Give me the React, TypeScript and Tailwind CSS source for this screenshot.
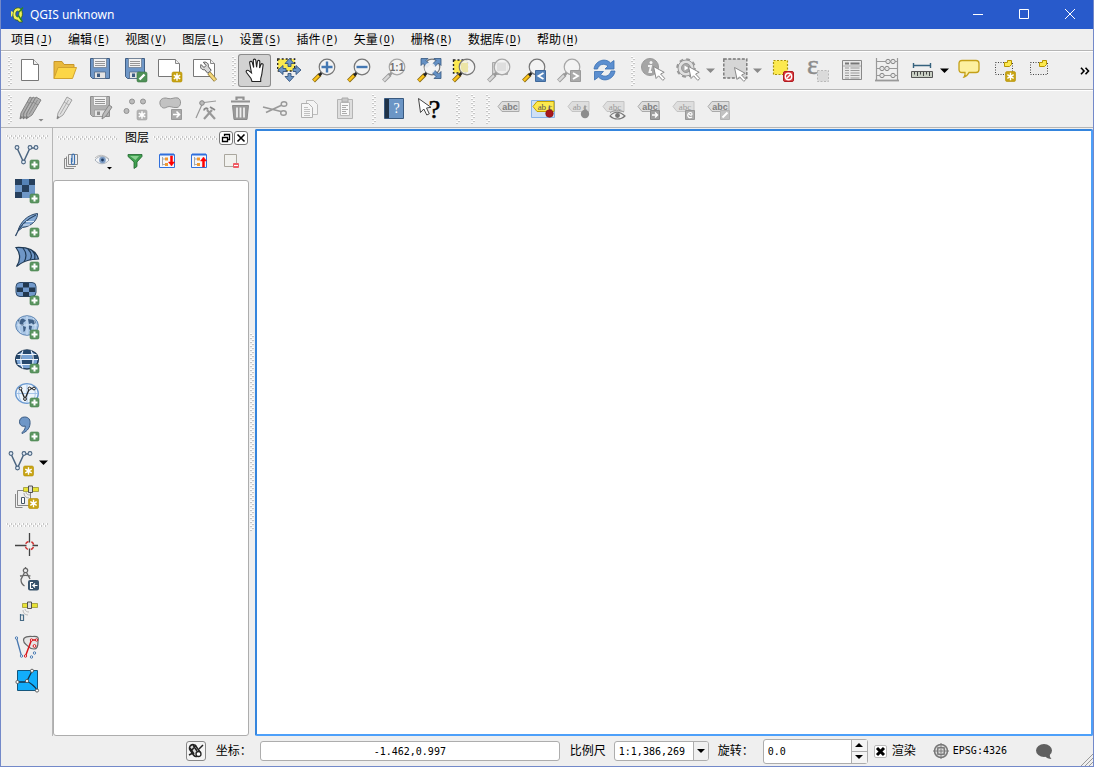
import clsx from 'clsx';
import { FunctionComponent, ReactNode } from 'react';

interface ArtProps {
  children: ReactNode;
  size?: number;
}

const Art: FunctionComponent<ArtProps> = ({ children, size = 25 }) => (
  <svg
    width={size}
    height={size}
    viewBox={`0 0 ${size} ${size}`}
    fill="none"
    aria-hidden="true"
    className="shrink-0 overflow-visible"
  >
    {children}
  </svg>
);

/* ---------- shared icon parts ---------- */

interface PartProps {
  x?: number;
  y?: number;
}

const PlusBadge = ({ x = 15, y = 15 }: PartProps) => (
  <g transform={`translate(${x} ${y})`}>
    <rect width="9" height="9" rx="1.5" fill="#5b9560" stroke="#44804b" strokeWidth=".6" />
    <path d="M4.5 1.5v6M1.5 4.5h6" stroke="#fff" strokeWidth="2" />
  </g>
);

const StarBadge = ({ x = 14, y = 14, gray = false }: PartProps & { gray?: boolean }) => (
  <g transform={`translate(${x} ${y})`}>
    <rect width="10" height="10" rx="1.5" fill={gray ? '#b4b4b4' : '#c8a414'} stroke={gray ? '#a2a2a2' : '#b38f00'} strokeWidth=".6" />
    <path d="M5 1.3v7.4M1.8 3.1l6.4 3.8M8.2 3.1L1.8 6.9" stroke="#fff" strokeWidth="1.4" />
    <circle cx="5" cy="5" r="1.7" fill="#fff" />
  </g>
);

const Cursor = ({ x = 12, y = 8 }: PartProps) => (
  <path
    transform={`translate(${x} ${y})`}
    d="M.5.5l2.6 12 2.5-2.7 4.2 4.6 2-1.9-4.2-4.5 3.6-1.7z"
    fill="#fff"
    stroke="#8a8a8a"
    strokeWidth="1"
  />
);

const Lens = ({ gray = false, children }: { gray?: boolean; children?: ReactNode }) => (
  <>
    <path d="M1.5 23l6.5-6.5" stroke={gray ? '#9a9a9a' : '#8b6b14'} strokeWidth="4" />
    <path d="M1.8 22.6l5.6-5.6" stroke={gray ? '#d8d8d8' : '#fcc419'} strokeWidth="2.4" />
    <path d="M7 17.5l3-3" stroke={gray ? '#999' : '#222'} strokeWidth="2.6" />
    <circle cx="15" cy="9" r="7.8" fill="#f3f3f3" fillOpacity=".85" stroke={gray ? '#a6a6a6' : '#777'} strokeWidth="1.2" />
    {children}
  </>
);

const Floppy = ({ gray = false }: { gray?: boolean }) => (
  <>
    <path d="M2.5.5h19v20h-17l-2-2z" fill={gray ? '#b0b0b0' : '#6f97c7'} stroke={gray ? '#8e8e8e' : '#415f85'} />
    <path d="M5.5.5h13v9h-13z" fill="#f2f2f2" stroke={gray ? '#9a9a9a' : '#66758a'} strokeWidth=".7" />
    <path d="M7 3.5h10M7 5.5h10M7 7.5h10" stroke="#8b8b8b" strokeWidth=".9" />
    <path d="M6.5 14h11v6.5h-11z" fill="#e4e4e4" stroke={gray ? '#949494' : '#48607f'} strokeWidth=".7" />
    <path d="M9 15.5h3V19H9z" fill={gray ? '#8c8c8c' : '#3d5c83'} />
  </>
);

const Label = ({ yellow = false, faded = false, text = 'abc' }: { yellow?: boolean; faded?: boolean; text?: string }) => (
  <>
    <path
      d="M2 10.5l4-5h17v10H6z"
      fill={yellow ? '#fce94f' : '#dedede'}
      stroke={yellow ? '#c4a000' : faded ? '#c4c4c4' : '#aaa'}
    />
    <text
      x="14"
      y="13.5"
      textAnchor="middle"
      fontSize="9"
      fontWeight={faded || yellow ? 400 : 700}
      fontFamily={faded || yellow ? 'Liberation Serif, serif' : 'Liberation Sans, sans-serif'}
      fill={yellow ? '#555' : faded ? '#9a9a9a' : '#808080'}
    >
      {text}
    </text>
  </>
);

const Pencil = ({ x = 0, fill = '#c9c9c9', stroke = '#a0a0a0' }: { x?: number; fill?: string; stroke?: string }) => (
  <g transform={`translate(${x} 0)`}>
    <path d="M5 23l1-6L15 1l5 3-9 15z" fill={fill} stroke={stroke} />
    <path d="M12 6l5 3M8 18.5L16.5 4" stroke={stroke} strokeWidth=".8" />
    <path d="M5 23l.5-3 2 1z" fill="#777" />
  </g>
);

const VectorNodes = () => (
  <>
    <path d="M2 3l6.5 14L15 3h6" stroke="#4b6580" strokeWidth="1.5" />
    {[[2, 2.5], [8.5, 17], [15, 2.5], [21, 2.5]].map(([cx, cy]) => (
      <circle key={`${cx}-${cy}`} cx={cx} cy={cy} r="1.9" fill="#e4edf7" stroke="#4b6580" strokeWidth="1.1" />
    ))}
  </>
);

/* ---------- first tool bar ---------- */

const NewIcon = () => (
  <Art>
    <path d="M3.5 1.5h12l5 5v16h-17z" fill="#fff" stroke="#777" />
    <path d="M15.5 1.5v5h5" fill="#eee" stroke="#777" />
  </Art>
);

const OpenIcon = () => (
  <Art>
    <path d="M1 20.5v-17h8l2 3h10v4" fill="#e9b93c" stroke="#c7962a" />
    <path d="M1 20.5L5 9.5h18.5L19.5 20.5z" fill="#fcd647" stroke="#d2a32f" />
  </Art>
);

const SaveIcon = () => (
  <Art>
    <Floppy />
  </Art>
);

const SaveAsIcon = () => (
  <Art>
    <Floppy />
    <rect x="14" y="14" width="10" height="10" rx="1.5" fill="#4f9157" stroke="#3d7545" strokeWidth=".6" />
    <path d="M16.5 21.5l5-5" stroke="#fff" strokeWidth="2.4" />
  </Art>
);

const Sheet = () => (
  <>
    <path d="M.5 1.5h17l4 4v13H.5z" fill="#fff" stroke="#777" />
    <path d="M17.5 1.5v4h4" fill="#eee" stroke="#888" />
  </>
);

const NewComposerIcon = () => (
  <Art>
    <Sheet />
    <StarBadge />
  </Art>
);

const ComposerManagerIcon = () => (
  <Art>
    <Sheet />
    <path d="M16 15l6.5 7.5" stroke="#8b7430" strokeWidth="4" />
    <path d="M16 15l6.2 7.2" stroke="#f4d779" strokeWidth="2.6" />
    <path d="M8 6.5l3 3 2-2-2.6-3.2c3-.8 5.6 1.2 5 4.4l2.8 3.6-3.4 3-3.2-3.6c-3 .4-5-2-3.600-5.200z" fill="#d8d8d8" stroke="#555" />
  </Art>
);

const HandIcon = () => (
  <Art>
    <path
      d="M10 23.500l-1-3-4.500-6c-1-1.600.8-3 2.200-1.800l2.800 2.300L7.700 5c-.3-1.900 2-2.300 2.500-.6l1.500 5.100-.4-7c0-1.900 2.300-1.900 2.500 0l.8 6.800.8-5.800c.3-1.700 2.500-1.400 2.400.3l-.2 6.200 1.300-3.500c.6-1.500 2.500-.9 2.200.7L19.700 17l-1 3.500v3z"
      fill="#fff"
      stroke="#222"
      strokeWidth="1.100"
    />
  </Art>
);

const PanSelectionIcon = () => (
  <Art>
    <path d="M.7 1h17v12H.7z" fill="#fce94f" stroke="#222" strokeWidth="1.300" strokeDasharray="2 2" />
    <path
      d="M12.500.5l4.500 5h-3v3h-3v-3H8zM12.500 23.500l-4.500-5h3v-3h3v3h3zM1 12l5-4.500v3h3v3H6v3zM24 12l-5-4.500v3h-3v3h3v3z"
      fill="#6f97c7"
      stroke="#34557f"
      strokeWidth=".9"
    />
  </Art>
);

const ZoomInIcon = () => (
  <Art>
    <Lens>
      <path d="M15 3.500v11M9.500 9h11" stroke="#4478b3" strokeWidth="2.400" />
    </Lens>
  </Art>
);

const ZoomOutIcon = () => (
  <Art>
    <Lens>
      <path d="M9.500 9h11" stroke="#4478b3" strokeWidth="2.400" />
    </Lens>
  </Art>
);

const ZoomNativeIcon = () => (
  <Art>
    <Lens gray>
      <text x="15" y="12.500" textAnchor="middle" fontSize="10" fontWeight="700" fontFamily="Liberation Sans, sans-serif" fill="#707070">
        1:1
      </text>
    </Lens>
  </Art>
);

const ZoomFullIcon = () => (
  <Art>
    <Lens />
    <path
      d="M4 .5h7L9 2.500l4 4-3 3-4-4-2 2zM24 .5h-7l2 2-4 4 2.500 2.500 4-4 2.500 2.500zM24 20.500h-7l2-2-4-4 2.500-2.500 4 4 2.500-2.500z"
      fill="#6490c3"
      stroke="#34557f"
      strokeWidth=".8"
    />
    <circle cx="13" cy="10" r="5.500" fill="#f3f3f3" fillOpacity=".9" />
  </Art>
);

const ZoomSelectionIcon = () => (
  <Art>
    <path d="M1.500 2h14v13h-14z" fill="#fce94f" stroke="#222" strokeWidth="1.400" strokeDasharray="2 2" />
    <Lens>
      <path d="M9 5h7v9H11l-2-3z" fill="#ece5a6" />
    </Lens>
  </Art>
);

const ZoomLayerIcon = () => (
  <Art>
    <path d="M5.500 4.500h15v12h-15z" fill="#d2d2d2" stroke="#aaa" />
    <Lens gray>
      <path d="M10 5h9v8h-9z" fill="#dedede" />
    </Lens>
  </Art>
);

const ZoomLastIcon = () => (
  <Art>
    <Lens />
    <path d="M13.500 12.500h10v11h-10z" fill="#5584bb" stroke="#40699b" />
    <path d="M21.500 15l-5 3 5 3" stroke="#fff" strokeWidth="1.800" />
  </Art>
);

const ZoomNextIcon = () => (
  <Art>
    <Lens gray />
    <path d="M13.500 12.500h10v11h-10z" fill="#aaa" stroke="#9a9a9a" />
    <path d="M16 15l5 3-5 3" stroke="#fff" strokeWidth="1.800" />
  </Art>
);

const RefreshIcon = () => (
  <Art>
    <path d="M2 11C3 3 13-1 18.500 5L22 2.500V11h-9l3-3C12 5 7 6 5.500 11z" fill="#5c8fd0" stroke="#3a6eb0" strokeWidth=".8" />
    <path d="M23 13c-1 8-11 12-16.500 6L2.500 22v-8.500h9l-3 3c4 3 9 2 10.500-3.500z" fill="#5c8fd0" stroke="#3a6eb0" strokeWidth=".8" />
  </Art>
);

const IdentifyIcon = () => (
  <Art>
    <circle cx="9" cy="9" r="8.500" fill="#a5a5a5" stroke="#999" />
    <circle cx="10" cy="4.500" r="1.500" fill="#f4f4f4" />
    <path d="M7 8h3l-1.500 6H11" stroke="#f4f4f4" strokeWidth="1.900" />
    <Cursor />
  </Art>
);

const ActionIcon = () => (
  <Art>
    <circle cx="10" cy="10" r="8.800" stroke="#999" strokeWidth="2" strokeDasharray="3.900 3" />
    <circle cx="10" cy="10" r="8" fill="#e0e0e0" stroke="#999" />
    <circle cx="10" cy="10" r="4.500" fill="#aaa" stroke="#999" />
    <path d="M8.500 7.500l4 2.500-4 2.500z" fill="#fff" />
    <Cursor />
  </Art>
);

const SelectIcon = () => (
  <Art>
    <path d="M.8 1h23v19H.8z" fill="#d6d6d6" stroke="#777" strokeWidth="1.400" strokeDasharray="3 1.500" />
    <Cursor x={11} y={9} />
  </Art>
);

const DeselectIcon = () => (
  <Art>
    <path d="M3.500 2.500h14v14h-14z" fill="#fce94f" stroke="#a8930c" strokeWidth="1.200" strokeDasharray="2 1.500" />
    <rect x="13.500" y="13.500" width="10" height="10" rx="1.500" fill="#d9393e" stroke="#b01c21" />
    <circle cx="18.500" cy="18.500" r="3.200" stroke="#fff" strokeWidth="1.400" />
    <path d="M16.500 20.500l4-4" stroke="#fff" strokeWidth="1.400" />
  </Art>
);

const ExpressionIcon = () => (
  <Art>
    <text x="2" y="16" fontSize="28" fontFamily="Liberation Serif, serif" fill="#8c8c8c" stroke="#8c8c8c" strokeWidth=".4">
      ε
    </text>
    <path d="M12.500 12.500h11v11h-11z" fill="#dadada" stroke="#b8b8b8" strokeDasharray="2 1.500" />
  </Art>
);

const TableIcon = () => (
  <Art>
    <path d="M2.500 2.500h19v19h-19z" fill="#e9e9e9" stroke="#888" />
    <path d="M5 5.500h4M10.500 5.500h9" stroke="#777" strokeWidth="2" />
    <path d="M3 8h18" stroke="#aaa" />
    {[10, 12.500, 15, 17.500, 20].map((y) => (
      <path key={y} d={`M5 ${y}h4M10.500 ${y}h9`} stroke="#999" />
    ))}
  </Art>
);

const AbacusIcon = () => (
  <Art>
    <path d="M1.500 0v22M22.500 0v22M1 3.500h21M1 10.500h21M1 17.500h21" stroke="#999" strokeWidth="1.200" />
    <path d="M0 22.500h24" stroke="#999" strokeWidth="1.800" />
    {[[13, 3.500], [18, 3.500], [7, 10.500], [12, 10.500], [7, 17.500], [18, 17.500]].map(([cx, cy]) => (
      <circle key={`${cx}-${cy}`} cx={cx} cy={cy} r="2.200" fill="#e4e4e4" stroke="#888" />
    ))}
  </Art>
);

const MeasureIcon = () => (
  <Art>
    <path d="M3.500 5v5M20.500 5v5M3.500 7.500h17" stroke="#34617d" strokeWidth="1.400" />
    <path d="M1.500 13.500h21v6h-21z" fill="#c9d0c4" stroke="#555" />
    <path d="M4.500 14v2.500M7.500 14v4M10.500 14v2.500M13.500 14v4M16.500 14v2.500M19.500 14v4" stroke="#444" />
  </Art>
);

const TipIcon = () => (
  <Art>
    <path
      d="M5 2.500h14q3 0 3 3v6q0 3-3 3h-7c-1 2-3 4-5 4.500 1-1.500 1.300-3 1-4.500H5q-3 0-3-3v-6q0-3 3-3z"
      fill="#fdf0a0"
      stroke="#c4a018"
      strokeWidth="1.300"
    />
  </Art>
);

const Bookmark = () => (
  <>
    <path d="M3.500 4.500h17v12h-17z" fill="#ececec" stroke="#444" strokeDasharray="1 1.500" />
    <path d="M12.500 4.500h3v-2h4v4l-2 2h-5z" fill="#fce94f" stroke="#b79500" />
  </>
);

const NewBookmarkIcon = () => (
  <Art>
    <Bookmark />
    <StarBadge x={13.500} y={13.500} />
  </Art>
);

const BookmarksIcon = () => (
  <Art>
    <Bookmark />
  </Art>
);

/* ---------- second tool bar ---------- */

const EditsIcon = () => (
  <Art>
    <Pencil x={-3} fill="#acacac" stroke="#838383" />
    <Pencil x={0} fill="#b4b4b4" stroke="#838383" />
    <Pencil x={3} fill="#b0b0b0" stroke="#838383" />
    <path d="M20.500 23h5l-2.500 2.500z" fill="#888" />
  </Art>
);

const ToggleEditIcon = () => (
  <Art>
    <Pencil x={-1} fill="#e0e0e0" />
  </Art>
);

const SaveEditsIcon = () => (
  <Art>
    <Floppy gray />
    <path d="M14 23l1-5 6-9 3 2-6 9z" fill="#bbb" stroke="#888" />
  </Art>
);

const AddFeatureIcon = () => (
  <Art>
    {[[9, 5.500], [20, 5.500], [3.500, 15]].map(([cx, cy]) => (
      <circle key={`${cx}-${cy}`} cx={cx} cy={cy} r="2.500" fill="#bbb" stroke="#929292" />
    ))}
    <StarBadge gray />
  </Art>
);

const MoveFeatureIcon = () => (
  <Art>
    <path d="M2 8c-1-5 4-7 8-5.500 4 1 6-1.500 10-.5 4 2 3 9-1 9.500-5 .5-7-2-10-.5C6 13 3 12 2 8z" fill="#c2c2c2" stroke="#949494" />
    <path d="M13.500 13.500h10v10h-10z" fill="#aaa" stroke="#999" />
    <path d="M15 18.500h6M18.500 15.500l3 3-3 3" stroke="#fff" strokeWidth="1.600" />
  </Art>
);

const NodeToolIcon = () => (
  <Art>
    <path d="M3 22L9 8.500M11 6.500l12-1.500" stroke="#999" strokeWidth="1.200" />
    <circle cx="9" cy="7" r="2.300" fill="#bbb" stroke="#888" />
    <path d="M11 23l8-9M14 14l8 9" stroke="#999" strokeWidth="2.200" />
    <path d="M17 11l5 3M11 14.500c0-2.500 3-3 4-1" stroke="#888" strokeWidth="1.800" />
  </Art>
);

const TrashIcon = () => (
  <Art>
    <path d="M8.500 4V1.500h7V4M3 5.500h19" stroke="#929292" strokeWidth="2.200" />
    <path d="M4.500 9.500h16L19 23.500H6z" fill="#9a9a9a" stroke="#8a8a8a" />
    <path d="M9 11.500v10M12.500 11.500v10M16 11.500v10" stroke="#eee" strokeWidth="1.800" />
  </Art>
);

const CutIcon = () => (
  <Art>
    <path d="M0 11l18 4.500M3 16.500L19 9" stroke="#999" strokeWidth="1.700" />
    <ellipse cx="21" cy="8" rx="2.800" ry="2.200" stroke="#999" strokeWidth="1.400" />
    <ellipse cx="20.500" cy="17" rx="2.800" ry="2.200" stroke="#999" strokeWidth="1.400" />
  </Art>
);

const CopyIcon = () => (
  <Art>
    <path d="M8.500 4.500h7l4 4v10h-11z" fill="#f4f4f4" stroke="#bdbdbd" />
    <path d="M3.500 7.500h7l4 4v10h-11z" fill="#f6f6f6" stroke="#b0b0b0" />
    <path d="M6 11.500h4M6 13.500h6M6 15.500h6M6 17.500h6M6 19.500h6" stroke="#c0c0c0" />
  </Art>
);

const PasteIcon = () => (
  <Art>
    <path d="M4.500 3.500h15v19h-15z" fill="#dedede" stroke="#b4b4b4" />
    <path d="M7.500 6.500h9v13h-9z" fill="#f8f8f8" stroke="#bbb" />
    <path d="M9 2h6v4H9z" fill="#c8c8c8" stroke="#aaa" />
    <path d="M9 9.500h6M9 11.500h4M9 13.500h6M9 15.500h4M9 17.500h5" stroke="#aaa" />
  </Art>
);

const HelpIcon = () => (
  <Art>
    <path d="M2.500 2.500h19v20h-19z" fill="#6b95c5" stroke="#39597f" />
    <path d="M3 3h4v19H3z" fill="#1f3247" />
    <text x="14.500" y="17" textAnchor="middle" fontSize="14" fontFamily="Liberation Serif, serif" fill="#fff">
      ?
    </text>
  </Art>
);

const WhatsThisIcon = () => (
  <Art>
    <path d="M1.500 2.500l2 14 3.300-3.500 3 6 2.500-1.200-2.800-5.800 4.500-.7z" fill="#fff" stroke="#444" />
    <text x="17.500" y="22" textAnchor="middle" fontSize="26" fontFamily="Liberation Serif, serif" fill="#000" stroke="#000" strokeWidth=".5">
      ?
    </text>
  </Art>
);

const LabelIcon = () => (
  <Art>
    <Label />
  </Art>
);

const PinnedLabelsIcon = () => (
  <Art>
    <path d="M.5 4.500h23v17H.5z" fill="#cfe0f5" stroke="#86b2e8" />
    <Label yellow text="ab c" />
    <path d="M18.500 9.500v5" stroke="#666" strokeWidth="1.400" />
    <circle cx="18.500" cy="17.500" r="3.800" fill="#a8171c" stroke="#7c1014" strokeWidth=".6" />
  </Art>
);

const PinLabelIcon = () => (
  <Art>
    <Label faded text="ab c" />
    <path d="M19 9.500v5" stroke="#999" strokeWidth="1.600" />
    <circle cx="19" cy="18" r="4.200" fill="#8c8c8c" />
  </Art>
);

const ShowLabelIcon = () => (
  <Art>
    <Label faded />
    <path d="M9 20c4-5 10-5 15 0-4 4-11 4-15 0z" fill="#f0f0f0" stroke="#777" strokeWidth="1.100" />
    <path d="M9 17c4-3.500 9-3.500 14-1" stroke="#999" />
    <circle cx="16.500" cy="19.500" r="2.400" fill="#777" />
  </Art>
);

const MoveLabelIcon = () => (
  <Art>
    <Label />
    <path d="M14.500 14.500h9v9h-9z" fill="#9f9f9f" stroke="#8a8a8a" />
    <path d="M16 19h5M19 16.500l2.500 2.500-2.500 2.500" stroke="#fff" strokeWidth="1.400" />
  </Art>
);

const RotateLabelIcon = () => (
  <Art>
    <Label faded />
    <path d="M14.500 14.500h9v9h-9z" fill="#acacac" stroke="#989898" />
    <path d="M21 21c-3 2-5-1-4-3s4-2 4 0-3 1-3-.500" stroke="#fff" strokeWidth="1.200" />
  </Art>
);

const ChangeLabelIcon = () => (
  <Art>
    <Label />
    <path d="M14.500 14.500h9v9h-9z" fill="#c2c2c2" stroke="#b4b4b4" />
    <path d="M16.500 21.500l5-5" stroke="#fff" strokeWidth="2" />
  </Art>
);

/* ---------- side tool bar ---------- */

const AddVectorIcon = () => (
  <Art size={24}>
    <VectorNodes />
    <PlusBadge />
  </Art>
);

const AddRasterIcon = () => (
  <Art size={24}>
    <path d="M0 0h20v19H0z" fill="#6f97c7" />
    <path d="M0 0h7v6H0zM14 0h6v6h-6zM7 6h7v7H7zM0 13h7v6H0z" fill="#263f5c" />
    <path d="M7 0h7v6H7z" fill="#5582b6" />
    <PlusBadge />
  </Art>
);

const AddSpatiaLiteIcon = () => (
  <Art size={24}>
    <path d="M3 18C5 9 13 1.500 22.500.5c.5 5-5 13-15 14z" fill="#86abd6" stroke="#2c4766" />
    <path d="M.500 23C4 14 12 6 21 2" stroke="#2c4766" strokeWidth="1.300" />
    <path d="M8 12h7M11 8.500h8" stroke="#e3edf8" strokeWidth=".9" />
    <PlusBadge />
  </Art>
);

const AddPostgisIcon = () => (
  <Art size={24}>
    <path d="M1 .5c10-.5 20 2 22.500 11.500l-6 .5c-6 .5-11 3-16 7 4-6 4-13-.500-19z" fill="#6f97c7" stroke="#1f3954" strokeWidth="1.200" />
    <path d="M8 1c4 5 4 9 1 14M13 2c4 4 4 8 2 11M17.500 4c3 3 3 5 2 8.500" stroke="#1f3954" strokeWidth="1.200" />
    <PlusBadge />
  </Art>
);

const AddMssqlIcon = () => (
  <Art size={24}>
    <rect x="1" y="1.500" width="20" height="14" rx="4" fill="#7199cb" stroke="#2f4a68" />
    <path d="M8 2h6v4.500H8zM2 6.500h6V11H2zM14 6.500h6V11h-6zM8 11h6v4.500H8z" fill="#22384f" />
    <PlusBadge />
  </Art>
);

const AddWmsIcon = () => (
  <Art size={24}>
    <ellipse cx="12" cy="10.500" rx="11.300" ry="9.800" fill="#a9c6e6" stroke="#5f86b3" />
    <path d="M3 5l5-1.500 3 2-3 2.500 1 2-2 1-3-3zM8 11l3 1-1 4-1.500 1zM13 4l7 1 1 3-3 2-1-2-3 1zM14 10l3 1-1 5-2-2z" fill="#3f5f85" />
    <path d="M2 10h20M12 1v19M6 3c-3 5-3 10 0 15M18 3c3 5 3 10 0 15" stroke="#dce9f6" strokeWidth=".7" />
    <PlusBadge />
  </Art>
);

const AddWcsIcon = () => (
  <Art size={24}>
    <ellipse cx="12" cy="10.500" rx="11.300" ry="9.500" fill="#7ba5d6" stroke="#1f3a57" strokeWidth="1.400" />
    <path d="M2 6h5v4.500H1zM17 6h5l1 4.500h-6zM7 11h10v4.500H7zM8 1h8v4H8z" fill="#27496d" />
    <path d="M1 10.500h22M2.500 5.500h19M2.500 15.500h19M8 1.500c-3 5-3 13 0 18M16 1.500c3 5 3 13 0 18" stroke="#eef4fb" strokeWidth="1.100" />
    <PlusBadge />
  </Art>
);

const AddWfsIcon = () => (
  <Art size={24}>
    <ellipse cx="12" cy="10.500" rx="11.300" ry="9.800" fill="#eef5fc" stroke="#6b9ad1" strokeWidth="1.300" />
    <path d="M1 10.500h22M12 1v19M6 3c-3 5-3 10 0 15M18 3c3 5 3 10 0 15" stroke="#9dc0e6" strokeWidth=".9" />
    <path d="M5.500 5.500l4.500 10.500 4.500-10.500h5" stroke="#222" strokeWidth="1.300" />
    {[[5.500, 5.500], [10, 16], [14.500, 5.500], [19, 5.500]].map(([cx, cy]) => (
      <circle key={`${cx}-${cy}`} cx={cx} cy={cy} r="1.400" fill="#fff" stroke="#222" />
    ))}
    <PlusBadge />
  </Art>
);

const AddTextIcon = () => (
  <Art size={24}>
    <path d="M9.500 0c4.500 0 6 3 5.500 7-.5 5-4 8-8 9.500 0-1 .2-1.300.8-1.800C9.500 13 10.500 11 10.200 9 7 10 4.500 8 4.500 4.800 4.500 2 6.500 0 9.500 0z" fill="#6f97c7" stroke="#3a5b83" />
    <PlusBadge />
  </Art>
);

const NewVectorIcon = () => (
  <Art size={24}>
    <VectorNodes />
    <StarBadge x={14.500} y={15} />
  </Art>
);

const Satellite = ({ x = 0, y = 0 }: PartProps) => (
  <g transform={`translate(${x} ${y})`}>
    <path d="M.5 2.500h15v4H.5z" fill="#e8e337" stroke="#8f8b25" strokeWidth=".7" />
    <path d="M5.500 1h4v6.500h-4z" fill="#ddd" stroke="#444" strokeWidth=".9" />
  </g>
);

const GpsLayerIcon = () => (
  <Art size={24}>
    <path d="M.5 9v13.500h7M2.500 5.500h13v15h-13z" fill="#efefef" stroke="#888" />
    <path d="M6.500 12.500h3v6h-3z" fill="#fff" stroke="#456" />
    <path d="M9 8c0 3 2 5 5 5M11 7c0 2 2 3 4 3" stroke="#aaa" />
    <Satellite x={8} y={0} />
    <StarBadge x={13.500} y={13.500} />
  </Art>
);

const CrosshairIcon = () => (
  <Art size={24}>
    <path d="M14.500 0v9.500M14.500 15.500V23M0 12.500h11.500M17.500 12.500H23" stroke="#444" strokeWidth="1.300" />
    <circle cx="14.500" cy="12.500" r="4.200" stroke="#c33" strokeWidth="1.500" strokeDasharray="3.600 3" strokeDashoffset="-1.500" />
  </Art>
);

const CadIcon = () => (
  <Art size={24}>
    <circle cx="10.500" cy="3.500" r="2.200" stroke="#666" strokeWidth="1.200" />
    <path d="M10.500 0v1.500M9.500 5.500L6 12.500c0 3 1 5 3.500 6.500M11.500 5.500L15 12M5 9c4-1 7-1 10.500 0" stroke="#666" strokeWidth="1.300" />
    <rect x="13" y="13" width="11" height="10.500" rx="2" fill="#37526b" />
    <path d="M18 15.500h-2.500v6H18M22.500 18.500H18l2-2M18 18.500l2 2" stroke="#fff" strokeWidth="1.100" />
  </Art>
);

const GpsIcon = () => (
  <Art size={24}>
    <Satellite x={7} y={0} />
    <path d="M8 9c0 3 2 5 5 5M10 8c0 2 2 3 4 3" stroke="#bbb" />
    <path d="M5.500 13v6.500h3v-5.500h-3" stroke="#466a85" strokeWidth="1.200" />
  </Art>
);

const TopologyIcon = () => (
  <Art size={24}>
    <path d="M8.500 5c0-3 5-4 9-3.500 6-.5 6.500 1 5.500 5 0 5-1 7.500-4 7.500-5 0-4-1.500-8-4.500-2-1.500-2.500-3-2.500-4.500z" fill="#e6e6e6" stroke="#666" strokeWidth="1.200" />
    <path d="M1.500 3l5 18" stroke="#4878b0" strokeWidth="1.300" />
    <path d="M10.500 21L16.500 5h5" stroke="#d8171c" strokeWidth="1.500" />
    <g fill="#fff" stroke="#4878b0">
      <circle cx="1.500" cy="3" r="1.200" />
      <circle cx="6.500" cy="21" r="1.200" />
      <circle cx="16.500" cy="22" r="1.200" />
      <circle cx="19.500" cy="18" r="1.200" />
    </g>
    <g fill="#fff" stroke="#d8171c">
      <circle cx="10.500" cy="21" r="1.200" />
      <circle cx="16.500" cy="5" r="1.200" />
      <circle cx="21.500" cy="5" r="1.200" />
      <circle cx="19.500" cy="11" r="1.400" />
    </g>
  </Art>
);

const VoronoiIcon = () => (
  <Art size={24}>
    <path d="M2.500 1.500h20v20h-20z" fill="#12aefb" stroke="#15567c" />
    <path d="M2.500 13h9L17 2M11.500 12c4 2 8 5 10.500 9" stroke="#12324a" strokeWidth="1.300" />
    {[[2.500, 13], [12, 12], [17, 1.800], [22, 21.500]].map(([cx, cy]) => (
      <circle key={`${cx}-${cy}`} cx={cx} cy={cy} r="1.600" fill="#fff" stroke="#555" strokeWidth=".9" />
    ))}
  </Art>
);

/* ---------- layer panel ---------- */

const AddGroupIcon = () => (
  <Art size={16}>
    <path d="M1.500 5.500v10H11M1.500 5.500h2M3.500 3.500v10H13M5.500 1.500h9v10h-9z" stroke="#8a8a8a" />
    <path d="M8.500 5v5c0 2 3 2 3 0V2.500c0-2-2.500-2-2.500 0V9" stroke="#3a70b0" strokeWidth="1.200" />
  </Art>
);

const VisibilityIcon = () => (
  <Art size={20}>
    <path d="M2 9c4-5 10-5 14 0-4 5-10 5-14 0z" fill="#f2f4f7" stroke="#a9b1bb" />
    <path d="M2 7c4-4 9-3.500 14 1" stroke="#bbb" />
    <circle cx="9.500" cy="9" r="3.300" fill="#7d9cc4" />
    <circle cx="9.500" cy="9" r="1.400" fill="#1d3a62" />
    <path d="M14 16h5l-2.500 2.500z" fill="#000" />
  </Art>
);

const FilterIcon = () => (
  <Art size={16}>
    <path d="M1 1.500h14v2L10 9v4.500L7 15.500V9L1 3.500z" fill="#3fa04f" stroke="#20632d" strokeWidth=".8" />
    <path d="M3 3h9L8.500 7z" fill="#8bd091" />
  </Art>
);

const TreeIcon = ({ up = false }: { up?: boolean }) => (
  <Art size={16}>
    <path d="M.5 1.500h15v13H.5z" fill="#f4f6fb" stroke="#2f6fdc" />
    <path d="M1 1.500h14" stroke="#2f6fdc" strokeWidth="2" />
    <path d="M3.500 4v8.500M3.500 6h3M3.500 11.500h3" stroke="#aaa" />
    <path d="M6 4.500h3v3H6zM6 10h3v3H6z" fill="#f29a2e" />
    {up ? (
      <path d="M11.500 14V8H9.500l3-4 3 4h-2v6z" fill="#f00" stroke="#f00" strokeWidth=".5" />
    ) : (
      <path d="M11.500 3v6H9.500l3 4 3-4h-2V3z" fill="#f00" stroke="#f00" strokeWidth=".5" />
    )}
  </Art>
);

const RemoveIcon = () => (
  <Art size={16}>
    <path d="M1.500 1.500h12v12h-12z" fill="#f1f1ee" stroke="#aaa79e" />
    <rect x="10" y="10" width="6" height="5" rx="1" fill="#ef5d66" />
    <path d="M11 12.500h4" stroke="#fff" />
  </Art>
);

/* ---------- small widgets ---------- */

const Grip: FunctionComponent<{ id: string; horizontal?: boolean; className?: string }> = ({
  id,
  horizontal = false,
  className,
}) => (
  <svg aria-hidden="true" className={clsx('shrink-0', className)}>
    <defs>
      <pattern id={id} width={horizontal ? 4 : 6} height={horizontal ? 6 : 4} patternUnits="userSpaceOnUse">
        <path d={horizontal ? 'M0 1h1v2H0zM2 3h1v2H2z' : 'M1 0h2v1H1zM3 2h2v1H3z'} fill="#fff" />
        <path d={horizontal ? 'M1 1h1v2H1zM3 3h1v2H3z' : 'M1 1h2v1H1zM3 3h2v1H3z'} fill="#c6c6c6" />
      </pattern>
    </defs>
    <rect width="100%" height="100%" fill={`url(#${id})`} />
  </svg>
);

const ToolButton: FunctionComponent<{ label: string; active?: boolean; children: ReactNode }> = ({
  label,
  active = false,
  children,
}) => (
  <button
    type="button"
    aria-label={label}
    title={label}
    className={clsx(
      'mx-px flex h-[33px] w-[33px] shrink-0 items-center justify-center rounded-[3px]',
      active && 'bg-[#d2d2d2] ring-1 ring-inset ring-[#8c8c8c]',
    )}
  >
    {children}
  </button>
);

const DropArrow: FunctionComponent<{ label: string; dark?: boolean }> = ({ label, dark = false }) => (
  <button type="button" aria-label={label} className="flex h-[33px] w-3 shrink-0 items-center justify-start">
    <svg width="10" height="6" viewBox="0 0 10 6" aria-hidden="true">
      <path d="M0 .5h9L4.500 5z" fill={dark ? '#000' : '#8a8a8a'} />
    </svg>
  </button>
);

type Tool = [string, FunctionComponent];

const fileTools: Tool[] = [
  ['新建', NewIcon],
  ['打开', OpenIcon],
  ['保存', SaveIcon],
  ['另存为', SaveAsIcon],
  ['新建打印版面', NewComposerIcon],
  ['版面管理器', ComposerManagerIcon],
];

const navigationTools: Tool[] = [
  ['平移地图', HandIcon],
  ['平移到所选', PanSelectionIcon],
  ['放大', ZoomInIcon],
  ['缩小', ZoomOutIcon],
  ['原始分辨率', ZoomNativeIcon],
  ['全图', ZoomFullIcon],
  ['缩放到所选', ZoomSelectionIcon],
  ['缩放到图层', ZoomLayerIcon],
  ['上一视图', ZoomLastIcon],
  ['下一视图', ZoomNextIcon],
  ['刷新', RefreshIcon],
];

const selectionTools: Tool[] = [
  ['取消选择', DeselectIcon],
  ['表达式选择', ExpressionIcon],
  ['属性表', TableIcon],
  ['字段计算器', AbacusIcon],
  ['测量', MeasureIcon],
];

const annotationTools: Tool[] = [
  ['地图提示', TipIcon],
  ['新建书签', NewBookmarkIcon],
  ['显示书签', BookmarksIcon],
];

const editTools: Tool[] = [
  ['当前编辑', EditsIcon],
  ['切换编辑', ToggleEditIcon],
  ['保存编辑', SaveEditsIcon],
  ['添加要素', AddFeatureIcon],
  ['移动要素', MoveFeatureIcon],
  ['节点工具', NodeToolIcon],
  ['删除', TrashIcon],
  ['剪切', CutIcon],
  ['复制', CopyIcon],
  ['粘贴', PasteIcon],
];

const helpTools: Tool[] = [
  ['帮助内容', HelpIcon],
  ['这是什么', WhatsThisIcon],
];

const labelTools: Tool[] = [
  ['标注', LabelIcon],
  ['高亮固定标注', PinnedLabelsIcon],
  ['固定标注', PinLabelIcon],
  ['显示标注', ShowLabelIcon],
  ['移动标注', MoveLabelIcon],
  ['旋转标注', RotateLabelIcon],
  ['更改标注', ChangeLabelIcon],
];

const layerTools: Tool[] = [
  ['添加矢量图层', AddVectorIcon],
  ['添加栅格图层', AddRasterIcon],
  ['添加 SpatiaLite 图层', AddSpatiaLiteIcon],
  ['添加 PostGIS 图层', AddPostgisIcon],
  ['添加 MSSQL 图层', AddMssqlIcon],
  ['添加 WMS 图层', AddWmsIcon],
  ['添加 WCS 图层', AddWcsIcon],
  ['添加 WFS 图层', AddWfsIcon],
  ['添加文本图层', AddTextIcon],
  ['新建矢量图层', NewVectorIcon],
  ['新建 GPX 图层', GpsLayerIcon],
];

const pluginTools: Tool[] = [
  ['坐标捕捉', CrosshairIcon],
  ['高级数字化', CadIcon],
  ['GPS 工具', GpsIcon],
  ['拓扑检查', TopologyIcon],
  ['拓扑着色', VoronoiIcon],
];

const panelTools: [string, ReactNode][] = [
  ['添加组', <AddGroupIcon />],
  ['管理可见性', <VisibilityIcon />],
  ['过滤图例', <FilterIcon />],
  ['全部展开', <TreeIcon />],
  ['全部折叠', <TreeIcon up />],
  ['移除图层', <RemoveIcon />],
];

const menus = [
  ['项目', 'J'],
  ['编辑', 'E'],
  ['视图', 'V'],
  ['图层', 'L'],
  ['设置', 'S'],
  ['插件', 'P'],
  ['矢量', 'O'],
  ['栅格', 'R'],
  ['数据库', 'D'],
  ['帮助', 'H'],
];

const ToolGroup: FunctionComponent<{ tools: Tool[]; active?: string }> = ({ tools, active }) => (
  <>
    {tools.map(([label, Icon]) => (
      <ToolButton key={label} label={label} active={label === active}>
        <Icon />
      </ToolButton>
    ))}
  </>
);

const SideGroup: FunctionComponent<{ tools: Tool[] }> = ({ tools }) => (
  <>
    {tools.map(([label, Icon]) => {
      const hasMenu = label === '新建矢量图层';
      return (
        <div key={label} className={clsx('flex h-[34px] items-center', hasMenu ? 'gap-1.5 pl-2' : 'pl-3.5')}>
          <button type="button" aria-label={label} title={label}>
            <Icon />
          </button>
          {hasMenu && <DropArrow label="更多图层类型" dark />}
        </div>
      );
    })}
  </>
);

/* ---------- page sections ---------- */

const TitleBar = () => (
  <header className="flex h-[29px] shrink-0 items-center bg-[#285acb] text-white">
    <svg width="16" height="18" viewBox="0 0 16 18" aria-hidden="true" className="ml-2 shrink-0">
      <path d="M5 4c2-3 7-3 8 1s0 6-1.500 8l2 3h-3.500l-1.500-2c-4 1-6-5-3.500-10z" fill="#f0f05a" stroke="#2d5a10" strokeWidth=".8" />
      <path d="M7 6c1-1.500 3-1.500 3 .5s-.500 4.500-1.500 4.500-2.500-2-1.500-5z" fill="#285acb" stroke="#2d5a10" strokeWidth=".6" />
      <path d="M14 1.500l-4 4.500M9 9l4 6" stroke="#2c8a1c" strokeWidth="1.500" />
      <path d="M2 5l2 1-1 5-1-1z" fill="#f0f05a" />
    </svg>
    <h1 className="ml-[5px] font-['Noto_Sans'] text-[12px] leading-4">QGIS unknown</h1>
    <div className="ml-auto flex h-full pb-0.5">
      <button type="button" aria-label="最小化" className="flex w-[46px] items-center justify-center">
        <svg width="10" height="10" viewBox="0 0 10 10" stroke="#fff" aria-hidden="true">
          <path d="M0 5.500h10" />
        </svg>
      </button>
      <button type="button" aria-label="最大化" className="flex w-[46px] items-center justify-center">
        <svg width="10" height="10" viewBox="0 0 10 10" fill="none" stroke="#fff" aria-hidden="true">
          <path d="M.5.5h9v9h-9z" />
        </svg>
      </button>
      <button type="button" aria-label="关闭" className="flex w-[46px] items-center justify-center">
        <svg width="10" height="10" viewBox="0 0 10 10" stroke="#fff" aria-hidden="true">
          <path d="M0 0l10 10M10 0L0 10" />
        </svg>
      </button>
    </div>
  </header>
);

const MenuBar = () => (
  <nav aria-label="菜单" className="flex h-[22px] shrink-0 items-center gap-[15px] border-b border-[#b6b6b6] pl-2.5">
    {menus.map(([label, key]) => (
      <button key={key} type="button" className="flex items-center whitespace-nowrap leading-4">
        {label}
        <span className="font-['DejaVu_Sans_Mono'] text-[10px]">
          (<u className="underline-offset-2">{key}</u>)
        </span>
      </button>
    ))}
  </nav>
);

const MainToolBar = () => (
  <div
    role="toolbar"
    aria-label="主工具栏"
    className="flex shrink-0 items-center overflow-hidden border-t border-b border-t-white border-b-[#b6b6b6] py-0.5"
  >
    <Grip id="grip-file" className="ml-1.5 h-[30px] w-1.5" />
    <ToolGroup tools={fileTools} />
    <Grip id="grip-nav" className="ml-2 h-[30px] w-1.5" />
    <ToolGroup tools={navigationTools} active="平移地图" />
    <Grip id="grip-attr" className="ml-2 h-[30px] w-1.5" />
    <ToolButton label="识别要素">
      <IdentifyIcon />
    </ToolButton>
    <ToolButton label="运行动作">
      <ActionIcon />
    </ToolButton>
    <DropArrow label="动作列表" />
    <ToolButton label="选择要素">
      <SelectIcon />
    </ToolButton>
    <DropArrow label="选择方式" />
    <ToolGroup tools={selectionTools} />
    <DropArrow label="测量方式" dark />
    <ToolGroup tools={annotationTools} />
    <button type="button" aria-label="更多" className="mr-[3px] ml-auto">
      <svg width="10" height="8" viewBox="0 0 10 8" fill="none" stroke="#000" strokeWidth="1.600" aria-hidden="true">
        <path d="M1 .8L4 4 1 7.200M5.500.8l3 3.200-3 3.200" />
      </svg>
    </button>
  </div>
);

const EditToolBar = () => (
  <div
    role="toolbar"
    aria-label="编辑工具栏"
    className="flex shrink-0 items-center overflow-hidden border-t border-b border-t-white border-b-[#b6b6b6] pt-px pb-0.5"
  >
    <Grip id="grip-edit" className="ml-1.5 h-[30px] w-1.5" />
    <ToolGroup tools={editTools} />
    <Grip id="grip-help" className="ml-2 h-[30px] w-1.5" />
    <ToolGroup tools={helpTools} />
    <Grip id="grip-a" className="ml-2 h-[30px] w-1.5" />
    <Grip id="grip-b" className="ml-[9px] h-[30px] w-1.5" />
    <Grip id="grip-label" className="ml-[9px] h-[30px] w-1.5" />
    <ToolGroup tools={labelTools} />
  </div>
);

const LayerPanel = () => (
  <section aria-label="图层" className="flex w-[196px] shrink-0 flex-col">
    <div className="flex h-5 items-center pl-1">
      <Grip id="grip-dock-l" horizontal className="h-1.5 w-[60px]" />
      <h2 className="flex-1 pl-1 text-center leading-4">图层</h2>
      <Grip id="grip-dock-r" horizontal className="mr-0.5 h-1.5 w-[64px]" />
      <button type="button" aria-label="浮动" className="flex h-3.5 w-3.5 items-center justify-center rounded-[3px] border border-[#777] bg-white">
        <svg width="10" height="10" viewBox="0 0 10 10" fill="none" stroke="#000" aria-hidden="true">
          <path d="M3.500 3V1.500h5v5H7M1.500 4.500h5v4h-5z" strokeWidth="1.300" />
        </svg>
      </button>
      <button type="button" aria-label="关闭" className="mr-px ml-px flex h-3.5 w-3.5 items-center justify-center rounded-[3px] border border-[#777] bg-white">
        <svg width="10" height="10" viewBox="0 0 10 10" stroke="#000" strokeWidth="1.600" aria-hidden="true">
          <path d="M1.500 1.500l7 7M8.500 1.500l-7 7" />
        </svg>
      </button>
    </div>
    <div className="flex h-8 items-start pt-px pl-0.5">
      {panelTools.map(([label, icon]) => (
        <button key={label} type="button" aria-label={label} title={label} className="flex h-6 w-8 items-center justify-center">
          {icon}
        </button>
      ))}
    </div>
    <div className="flex-1 rounded-[3px] border border-[#adadad] bg-white" />
  </section>
);

const StatusBar = () => (
  <footer className="flex h-[30px] shrink-0 items-center justify-end">
    <button type="button" aria-label="切换范围显示" className="mr-2.5 flex h-5 w-5 items-center justify-center rounded-[3px] border border-[#888] bg-[#f4f4f4]">
      <svg width="16" height="16" viewBox="0 0 16 16" fill="none" stroke="#222" aria-hidden="true" className="shrink-0">
        <rect x="3.500" y="1" width="7" height="13" rx="3.500" transform="rotate(-35 7 8)" fill="#ddd" strokeWidth="1.600" />
        <path d="M5 2l4 6M8 2L4 7M2 5l4 6M1 12l4-2M11 6l4-4" strokeWidth="1.500" />
        <circle cx="10.500" cy="11" r="2.500" fill="#fff" strokeWidth="1.300" />
      </svg>
    </button>
    <label htmlFor="coords" className="w-11 leading-4">
      坐标：
    </label>
    <input
      id="coords"
      defaultValue="-1.462,0.997"
      className="h-5 w-[300px] min-w-0 rounded-[3px] border border-[#adadad] bg-white text-center font-['DejaVu_Sans_Mono'] text-[10px] outline-none"
    />
    <label htmlFor="scale" className="ml-2.5 w-11 leading-4">
      比例尺
    </label>
    <div className="relative h-5 w-[95px] shrink-0">
      <select
        id="scale"
        className="h-full w-full appearance-none rounded-[3px] border border-[#adadad] bg-white pl-1 font-['DejaVu_Sans_Mono'] text-[10px] outline-none"
      >
        <option>1:1,386,269</option>
      </select>
      <span className="pointer-events-none absolute inset-y-px right-px flex w-[15px] items-center justify-center rounded-r-[2px] border-l border-[#adadad] bg-[#f0f0f0]">
        <svg width="8" height="4" viewBox="0 0 8 4" aria-hidden="true">
          <path d="M0 0h8L4 4z" />
        </svg>
      </span>
    </div>
    <label htmlFor="rotation" className="ml-[9px] w-[45px] leading-4">
      旋转：
    </label>
    <div className="flex h-[25px] w-[105px] shrink-0 rounded-[3px] border border-[#adadad] bg-white">
      <input
        id="rotation"
        defaultValue="0.0"
        className="min-w-0 flex-1 bg-transparent pl-1 font-['DejaVu_Sans_Mono'] text-[10px] outline-none"
      />
      <div className="flex w-4 flex-col border-l border-[#adadad] bg-[#f4f4f4]">
        <button type="button" aria-label="增加" className="flex flex-1 items-center justify-center border-b border-[#adadad]">
          <svg width="8" height="4" viewBox="0 0 8 4" aria-hidden="true">
            <path d="M0 4h8L4 0z" />
          </svg>
        </button>
        <button type="button" aria-label="减少" className="flex flex-1 items-center justify-center">
          <svg width="8" height="4" viewBox="0 0 8 4" aria-hidden="true">
            <path d="M0 0h8L4 4z" />
          </svg>
        </button>
      </div>
    </div>
    <label className="ml-1.5 flex shrink-0 items-center gap-[5px] leading-4">
      <span className="relative flex h-[13px] w-[13px]">
        <input type="checkbox" defaultChecked className="peer h-full w-full appearance-none rounded-[2px] border border-[#bbb] bg-white" />
        <svg viewBox="0 0 13 13" stroke="#000" strokeWidth="3" aria-hidden="true" className="pointer-events-none absolute inset-0 hidden peer-checked:block">
          <path d="M3 3l7 7M10 3l-7 7" />
        </svg>
      </span>
      渲染
    </label>
    <button type="button" className="ml-[17px] flex shrink-0 items-center gap-1 leading-4">
      <svg width="16" height="16" viewBox="0 0 16 16" fill="none" stroke="#777" aria-hidden="true">
        <circle cx="8" cy="8" r="6.500" fill="#ddd" strokeWidth="1.500" />
        <circle cx="8" cy="8" r="3.500" />
        <path d="M8 0v16M0 8h16M4.500 4.500h7v7h-7z" strokeWidth=".9" />
      </svg>
      <span className="font-['DejaVu_Sans_Mono'] text-[10px]">EPSG:4326</span>
    </button>
    <button type="button" aria-label="消息" className="mr-[29px] ml-[29px] shrink-0">
      <svg width="16" height="16" viewBox="0 0 16 16" fill="#606060" aria-hidden="true">
        <ellipse cx="8" cy="7.500" rx="8" ry="6.500" />
        <path d="M9 13l5-2c-.5 2 0 3.500 1.500 5C13 16 10 15 9 13z" />
      </svg>
    </button>
    <svg width="12" height="12" viewBox="0 0 12 12" stroke="#999" aria-hidden="true" className="shrink-0 self-end">
      <path d="M0 12L12 0M4 12l8-8M8 12l4-4" />
    </svg>
  </footer>
);

export default function App() {
  return (
    <div className="flex h-screen flex-col border-x border-b border-[#7389c9] bg-[#efefef] font-['Liberation_Sans','Noto_Sans_CJK_SC',sans-serif] text-[12px] text-black">
      <TitleBar />
      <MenuBar />
      <MainToolBar />
      <EditToolBar />
      <main className="flex min-h-0 flex-1">
        <aside aria-label="图层工具栏" className="flex w-[52px] shrink-0 flex-col overflow-hidden border-r border-[#b6b6b6]">
          <Grip id="grip-side-a" horizontal className="mt-1.5 ml-[5px] h-1.5 w-[42px]" />
          <SideGroup tools={layerTools} />
          <Grip id="grip-side-b" horizontal className="mt-2 ml-[5px] h-1.5 w-[42px]" />
          <SideGroup tools={pluginTools} />
        </aside>
        <LayerPanel />
        <div className="flex w-1.5 shrink-0 items-center">
          <Grip id="grip-split" className="h-[198px] w-1.5" />
        </div>
        <div
          role="region"
          aria-label="地图"
          className="mt-px flex-1 rounded-[2px] border-2 border-t-[#3585dd] border-r-[#4da0fa] border-b-[#4da0fa] border-l-[#3585dd] bg-white"
        />
      </main>
      <StatusBar />
    </div>
  );
}
